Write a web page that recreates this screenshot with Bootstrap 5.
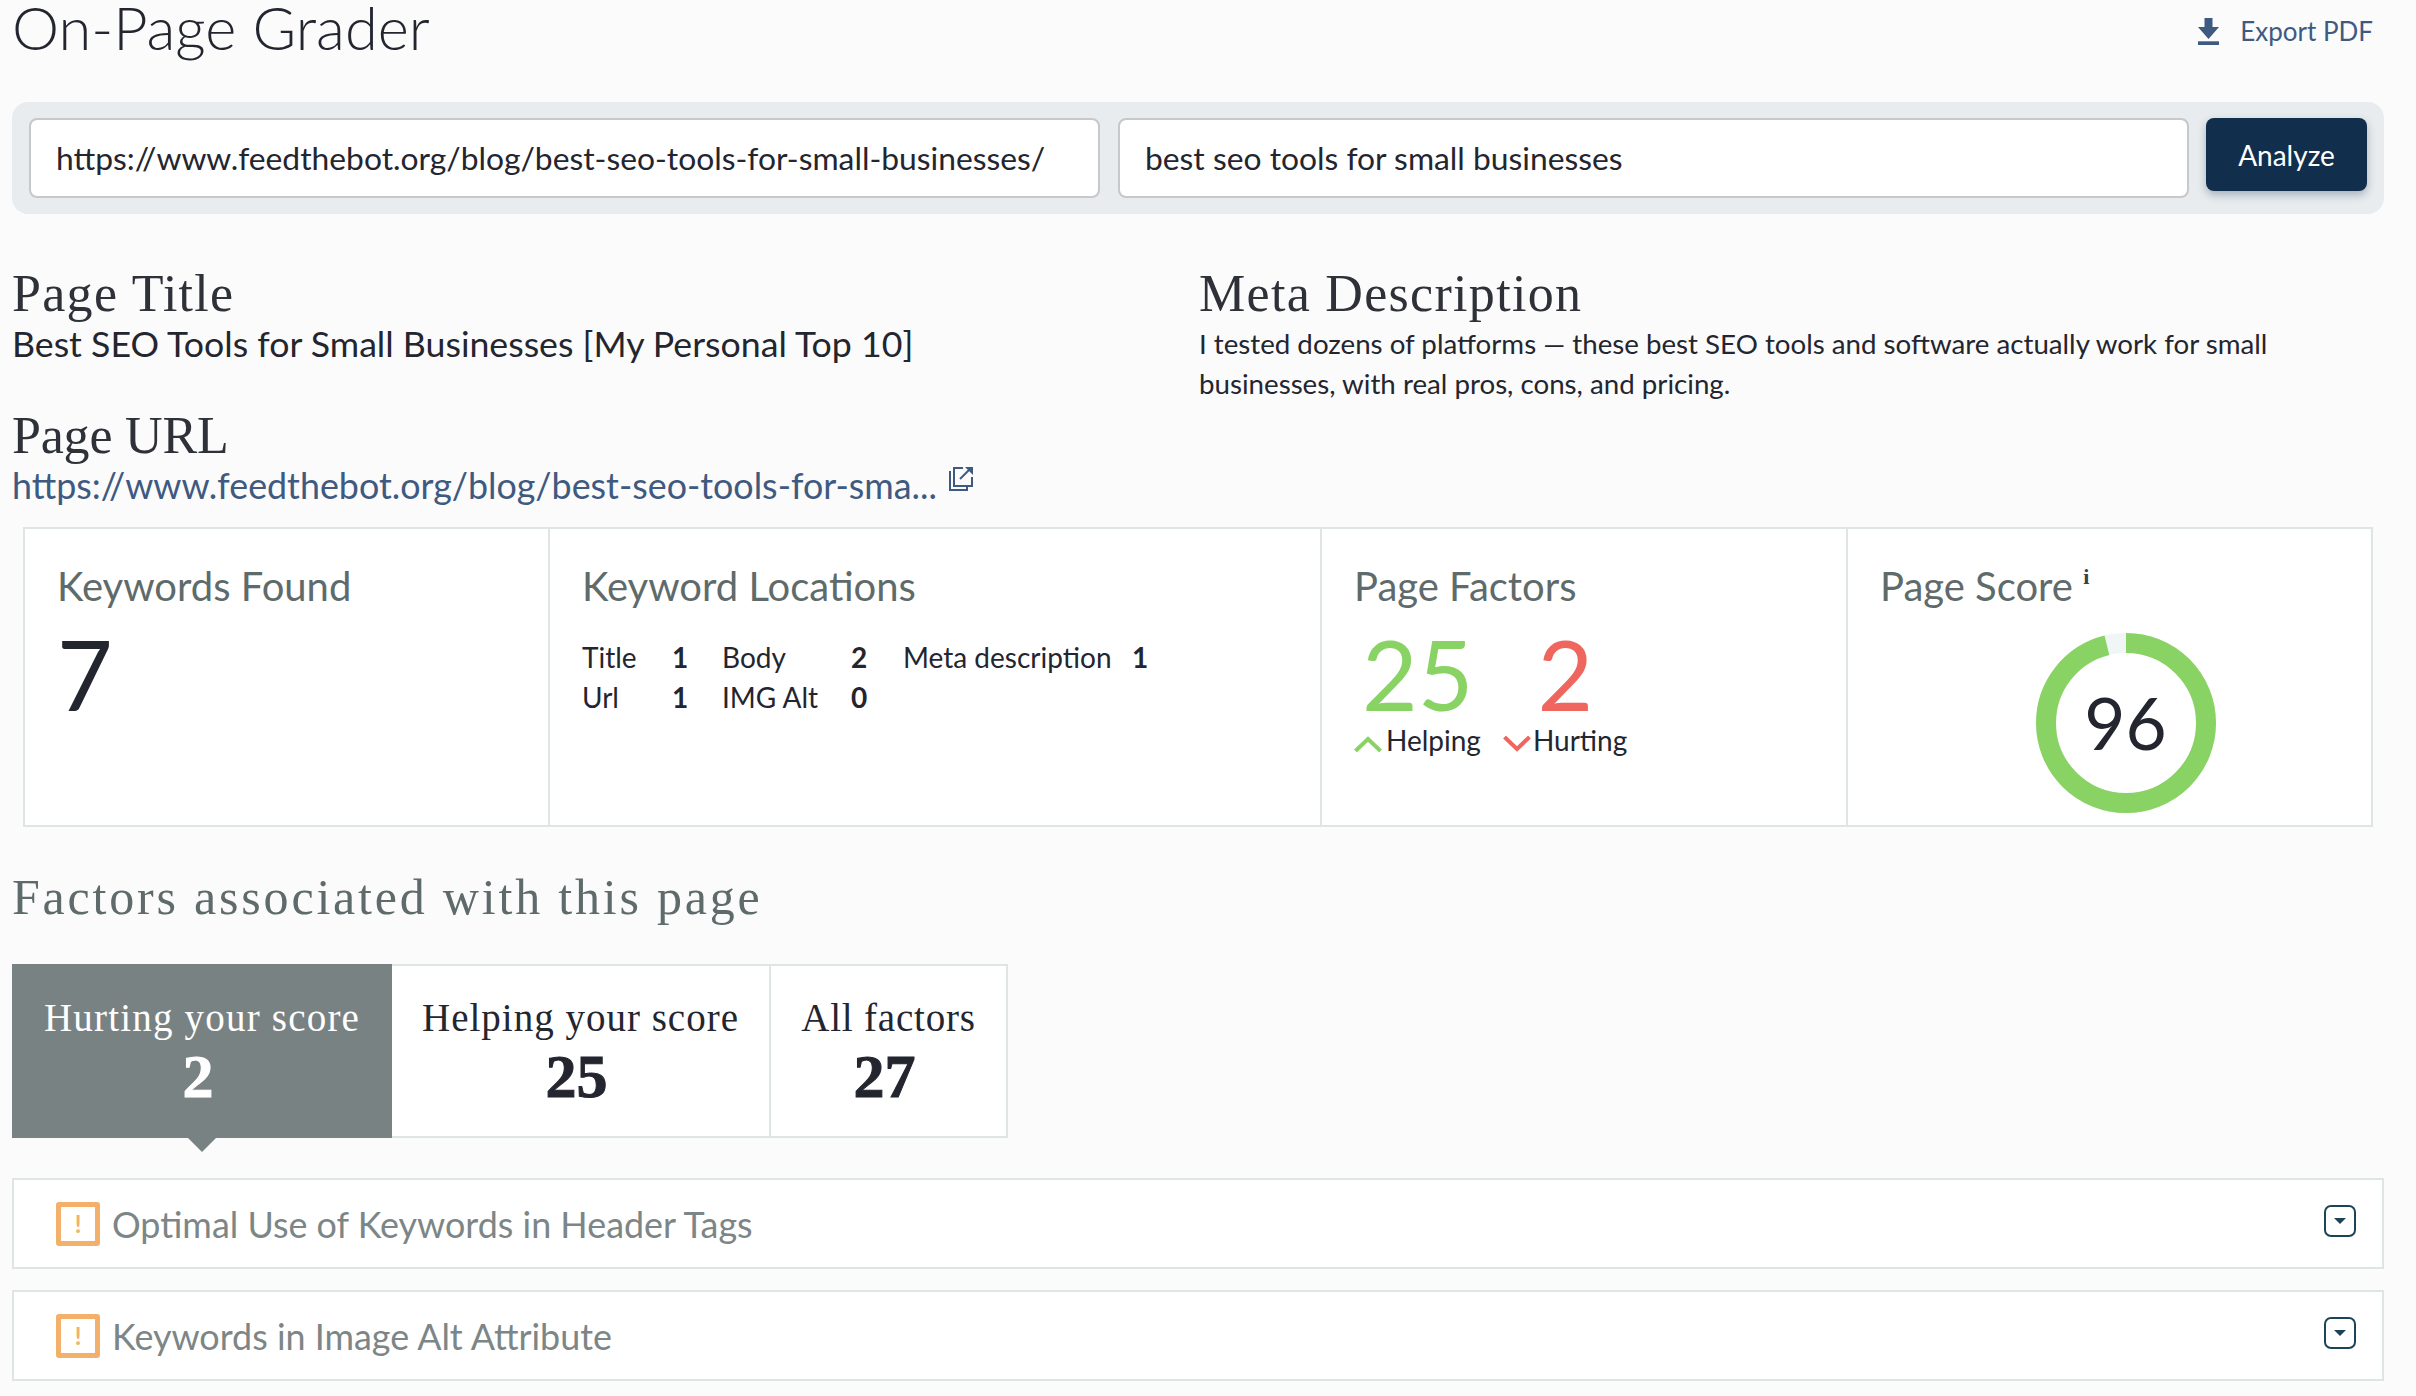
<!DOCTYPE html>
<html lang="en">
<head>
<meta charset="UTF-8">
<title>On-Page Grader</title>
<link href="https://cdn.jsdelivr.net/npm/bootstrap@5.3.0/dist/css/bootstrap.min.css" rel="stylesheet">
<style>
body { background: #fbfbfb; font-family: Lato, "Liberation Sans", sans-serif; color: #23252f; }
.page { padding: 0 32px 0 12px; }
.slab { font-family: "Liberation Serif", serif; font-weight: 400; letter-spacing: 1.3px; }
.top-bar { height: 102px; }
.top-bar h1 { font-size: 59.5px; font-weight: 300; line-height: 58px; margin: -2px 0 0; color: #23252f; }
.export { font-size: 26px; color: #3f5a80; text-decoration: none; gap: 21px; margin-right: 11px; margin-top: 18px; line-height: 27px; }
.search-bar { background: #e8ecef; border-radius: 16px; padding: 16px 17px; gap: 18px; height: 112px; }
.search-bar .form-control { height: 80px; font-size: 31.8px; color: #23252f; padding: 0 25px; border: 2px solid #c6c9cb; border-radius: 8px; flex: 1 1 0; }
.btn-analyze { width: 161px; height: 73px; margin-left: -1px; background: #122e4d; color: #fff; font-size: 28px; border: 0; border-radius: 8px; box-shadow: 0 4px 8px rgba(18,46,77,.3); flex: none; }
.info { margin-top: 52px; }
.info .left { width: 1187px; flex: none; }
.info h2 { font-size: 52px; line-height: 56px; margin: 0; color: #2f3139; }
.info h2.tight { letter-spacing: -.2px; }
.page-title { font-size: 35.7px; line-height: 44px; height: 86px; }
.page-link { font-size: 35.85px; line-height: 44px; color: #3f5a80; text-decoration: none; }
.ext { margin-left: 12px; vertical-align: 8px; }
.meta { font-size: 27.7px; line-height: 40px; margin: 2px 0 0; }
.stats { margin: 19px 11px 0; height: 300px; background: #fff; border: 2px solid #dfe4e4; }
.stat { padding: 33px 20px 0 32px; border-right: 2px solid #dfe4e4; width: 526px; flex: none; }
.stat:first-child { width: 525px; }
.stat.wide { width: 772px; }
.stat:last-child { border-right: 0; flex: 1 1 0; width: auto; padding-right: 0; }
.stat-label { font-size: 40px; line-height: 48px; color: #5f6b6b; }
.big { font-size: 96px; line-height: 96px; }
.kw { display: grid; grid-template-columns: 90px 50px 129px 52px 229px auto; grid-auto-rows: 40px; font-size: 28px; line-height: 40px; margin-top: 27px; justify-content: start; }
.kw b { font-weight: 700; }
.factor-nums { margin-top: 16px; }
.factor-nums span { display: block; }
.green { color: #89d264; }
.red { color: #ef665f; }
.factor-labels { font-size: 28px; line-height: 36px; gap: 22px; }
.factor-labels svg { margin-right: 4px; }
.factor-labels .hurt svg { margin-right: 2px; }
.donut { position: relative; width: 180px; height: 180px; margin: 23px auto 0; }
.donut-num { position: absolute; inset: 0; display: flex; align-items: center; justify-content: center; font-size: 71px; }
.section-title { font-size: 50px; line-height: 60px; color: #5f6b6b; margin: 40px 0 0; letter-spacing: 2.8px; }
.tabs { margin-top: 37px; height: 174px; }
.tab-item { position: relative; padding: 28px 0 0; background: #fff; border: 2px solid #dfe4e4; border-left: 0; text-align: center; line-height: 1; letter-spacing: 1px; }
.tab-item .tab-label { font-size: 39px; line-height: 48px; display: block; }
.tab-item .tab-num { font-size: 62px; line-height: 68px; font-weight: 700; display: block; letter-spacing: 0; padding-right: 8px; -webkit-text-stroke: 1px currentColor; }
.tab-item.active { background: #798282; border: 0; color: #fff; padding-top: 30px; }
.tab-item.active::after { content: ""; position: absolute; left: 50%; margin-left: -14px; top: 100%; border: 14px solid transparent; border-top-color: #798282; border-bottom: 0; }
.t1 { width: 380px; letter-spacing: 1.2px; } .t2 { width: 379px; } .t3 { width: 237px; letter-spacing: .8px; }
.factor { height: 91px; background: #fff; border: 2px solid #dfe4e4; margin-bottom: 21px; padding: 0 26px 0 42px; }
.factor:first-of-type { margin-top: 40px; }
.warn { width: 44px; height: 44px; border: 5px solid #f2b06a; border-radius: 3px; flex: none; color: #f2b06a; font-size: 24px; font-weight: 700; line-height: 1; margin-right: 12px; }
.factor-name { font-size: 35.9px; color: #7c8686; line-height: 44px; padding-top: 2px; }
.toggle { width: 32px; height: 32px; border: 2px solid #1d4358; border-radius: 7px; flex: none; margin-top: -6px; }
.toggle::after { content: ""; border: 6px solid transparent; border-top: 6px solid #1d4358; border-bottom: 0; }
sup.info-i { font-family: "Liberation Serif", serif; font-weight: 700; font-size: 22px; top: -17px; vertical-align: baseline; position: relative; color: #3a3f45; }
</style>
</head>
<body>
<div class="page">
  <div class="top-bar d-flex justify-content-between align-items-start">
    <h1>On-Page Grader</h1>
    <a href="#" class="export d-flex align-items-center">
      <svg width="21" height="27" viewBox="0 0 21 27"><path d="M6.5 0h8v9H21L10.5 21 0 9h6.5z" fill="#3f5a80"/><rect y="23.3" width="21" height="3.7" fill="#3f5a80"/></svg>
      Export PDF
    </a>
  </div>

  <form class="search-bar d-flex align-items-start">
    <input class="form-control" type="text" value="https://www.feedthebot.org/blog/best-seo-tools-for-small-businesses/">
    <input class="form-control" type="text" value="best seo tools for small businesses">
    <button type="button" class="btn btn-analyze">Analyze</button>
  </form>

  <div class="info d-flex">
    <div class="left">
      <h2 class="slab">Page Title</h2>
      <div class="page-title">Best SEO Tools for Small Businesses [My Personal Top 10]</div>
      <h2 class="slab tight">Page URL</h2>
      <a href="#" class="page-link">https://www.feedthebot.org/blog/best-seo-tools-for-sma...<svg class="ext" width="24" height="24" viewBox="0 0 24 24" fill="none" stroke="#3f5a80" stroke-width="2"><path d="M1 4v19h17v-4"/><path d="M14 1H5v18h18v-9"/><path d="M11 12 20 3"/><path d="M16 0h8v8z" fill="#3f5a80" stroke="none"/></svg></a>
    </div>
    <div>
      <h2 class="slab">Meta Description</h2>
      <p class="meta">I tested dozens of platforms — these best SEO tools and software actually work for small<br>businesses, with real pros, cons, and pricing.</p>
    </div>
  </div>

  <div class="stats d-flex">
    <div class="stat">
      <div class="stat-label">Keywords Found</div>
      <div class="big factor-nums">7</div>
    </div>
    <div class="stat wide">
      <div class="stat-label">Keyword Locations</div>
      <div class="kw">
        <span>Title</span><b>1</b><span>Body</span><b>2</b><span>Meta description</span><b>1</b>
        <span>Url</span><b>1</b><span>IMG Alt</span><b>0</b>
      </div>
    </div>
    <div class="stat">
      <div class="stat-label">Page Factors</div>
      <div class="d-flex big factor-nums ps-2"><span class="green">25</span><span class="red ms-5 ps-3">2</span></div>
      <div class="factor-labels d-flex">
        <span><svg width="28" height="16" viewBox="0 0 28 16" fill="none" stroke="#89d264" stroke-width="4"><path d="M1.5 15 14 3l12.5 12"/></svg>Helping</span>
        <span class="hurt"><svg width="28" height="16" viewBox="0 0 28 16" fill="none" stroke="#ef665f" stroke-width="4"><path d="M1.5 1 14 13 26.5 1"/></svg>Hurting</span>
      </div>
    </div>
    <div class="stat">
      <div class="stat-label">Page Score <sup class="info-i">i</sup></div>
      <div class="donut">
        <svg width="180" height="180" viewBox="0 0 180 180">
          <circle cx="90" cy="90" r="80" fill="none" stroke="#f0f5f5" stroke-width="20"/>
          <circle cx="90" cy="90" r="80" fill="none" stroke="#89d264" stroke-width="20" stroke-dasharray="482.5 502.7" transform="rotate(-90 90 90)"/>
        </svg>
        <div class="donut-num">96</div>
      </div>
    </div>
  </div>

  <h3 class="section-title slab">Factors associated with this page</h3>

  <div class="tabs d-flex">
    <div class="tab-item active t1 slab"><span class="tab-label">Hurting your score</span><span class="tab-num">2</span></div>
    <div class="tab-item t2 slab"><span class="tab-label">Helping your score</span><span class="tab-num">25</span></div>
    <div class="tab-item t3 slab"><span class="tab-label">All factors</span><span class="tab-num">27</span></div>
  </div>

  <div class="factors">
    <div class="factor d-flex align-items-center">
      <span class="warn d-flex align-items-center justify-content-center">!</span>
      <span class="factor-name flex-grow-1">Optimal Use of Keywords in Header Tags</span>
      <span class="toggle d-flex align-items-center justify-content-center"></span>
    </div>
    <div class="factor d-flex align-items-center">
      <span class="warn d-flex align-items-center justify-content-center">!</span>
      <span class="factor-name flex-grow-1">Keywords in Image Alt Attribute</span>
      <span class="toggle d-flex align-items-center justify-content-center"></span>
    </div>
  </div>
</div>
<script src="https://cdn.jsdelivr.net/npm/bootstrap@5.3.0/dist/js/bootstrap.bundle.min.js"></script>
</body>
</html>
